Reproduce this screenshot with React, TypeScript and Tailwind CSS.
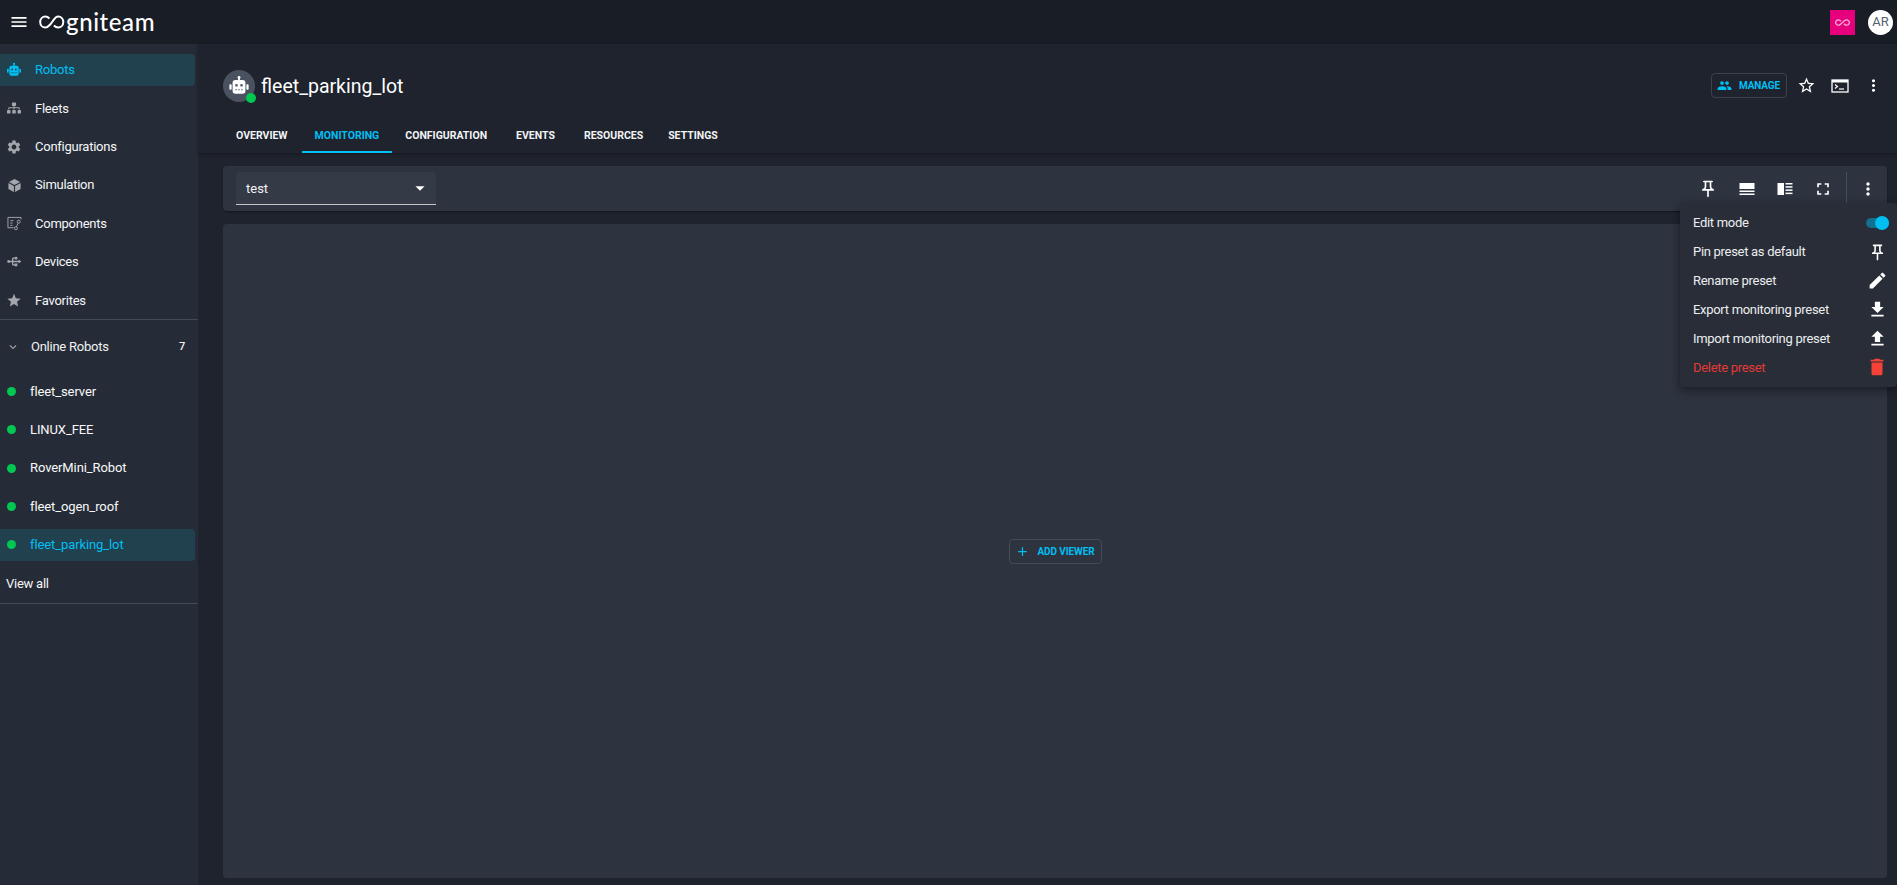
import { MdSettings, MdStar, MdStarBorder, MdPeople, MdMoreVert, MdOutlinePushPin, MdFullscreen, MdEdit, MdFileDownload, MdFileUpload, MdDelete, MdAllInclusive, MdAdd, MdArrowDropDown, MdExpandMore, MdUsb, MdMenu } from "react-icons/md";
import { FaSitemap } from "react-icons/fa";
import type { ReactNode } from "react";

const font = "font-['Roboto','Noto_Sans',sans-serif]";

function ComponentsIcon() {
  return (
    <svg width="15" height="15" viewBox="0 0 16 16" fill="none" stroke="currentColor" strokeWidth="1">
      <path d="M15 3.5V1.5H1V12.5H7" />
      <path d="M3.5 5H7M3.5 7.5H6M3.500 10H6" />
      <circle cx="12.5" cy="6" r="1.6" />
      <circle cx="9.5" cy="13" r="1.6" />
      <path d="M12 7.500L10 11.500" />
    </svg>
  );
}

function RobotIcon({ size, bg }: { size: number; bg: string }) {
  return (
    <svg width={size} height={size} viewBox="0 0 24 24" fill="currentColor">
      <rect x="11" y="2" width="2" height="4" />
      <circle cx="12" cy="2.500" r="1.500" />
      <rect x="5" y="5.500" width="14" height="15" rx="3" />
      <rect x="1.500" y="10" width="2.500" height="6" rx="1" />
      <rect x="20" y="10" width="2.500" height="6" rx="1" />
      <rect x="8" y="10" width="2.500" height="2.500" fill={bg} />
      <rect x="13.500" y="10" width="2.500" height="2.500" fill={bg} />
      <path d="M8 15.500h1.600v1.200H8zM11.200 15.500h1.600v1.200h-1.600zM14.400 15.500H16v1.200h-1.600z" fill={bg} />
    </svg>
  );
}

function CubeIcon() {
  return (
    <svg width="15" height="15" viewBox="0 0 16 16" fill="currentColor">
      <path d="M8 1l6 3.200L8 7.500 2 4.200 8 1z" />
      <path d="M1.500 5.200L7.400 8.500v6.500l-5.900-3.200V5.200z" />
      <path d="M14.500 5.200L8.600 8.500v6.500l5.900-3.200V5.200z" />
    </svg>
  );
}

function LinesIcon() {
  return (
    <svg width="18" height="14" viewBox="0 0 18 14" fill="currentColor">
      <rect x="1.500" y="1" width="15" height="6" />
      <rect x="1.500" y="8.500" width="15" height="1.500" />
      <rect x="1.500" y="11.500" width="15" height="1.500" />
    </svg>
  );
}

function PanelIcon() {
  return (
    <svg width="18" height="14" viewBox="0 0 18 14" fill="currentColor">
      <rect x="1.500" y="1" width="6.500" height="12" />
      <rect x="9.500" y="1" width="7" height="1.500" />
      <rect x="9.500" y="4.200" width="7" height="1.500" />
      <rect x="9.500" y="7.400" width="7" height="1.500" />
      <rect x="9.500" y="10.600" width="7" height="1.500" />
    </svg>
  );
}

function TerminalIcon() {
  return (
    <svg width="18" height="14" viewBox="0 0 18 14" fill="none" stroke="currentColor">
      <rect x="1" y="1" width="16" height="12" strokeWidth="1.300" />
      <rect x="1" y="1" width="16" height="2.500" fill="currentColor" strokeWidth="0" />
      <path d="M4 5.500L6.500 7.500 4 9.500" strokeWidth="1.200" />
      <path d="M8 10H13" strokeWidth="1.200" />
    </svg>
  );
}

function NavItem({ icon, label, active }: { icon: ReactNode; label: string; active?: boolean }) {
  return (
    <div className={`flex h-[32px] w-[195px] items-center rounded-r-[4px] pl-[6px] text-[13px] tracking-[-0.25px] ${active ? "bg-[#21414f] text-[#00bff3]" : "text-[#f5f6f7]"}`}>
      <span className={`flex w-[16px] justify-center ${active ? "text-[#00bff3]" : "text-[#a3a6ac]"}`}>{icon}</span>
      <span className="ml-[13px]">{label}</span>
    </div>
  );
}

function RobotItem({ label, active }: { label: string; active?: boolean }) {
  return (
    <div className={`flex h-[32px] w-[195px] items-center rounded-r-[4px] pl-[7px] text-[13px] tracking-[-0.1px] ${active ? "bg-[#21414f] text-[#00bff3]" : "text-[#f8f9fa]"}`}>
      <span className="h-[9px] w-[9px] rounded-full bg-[#00c853]" />
      <span className="ml-[14px]">{label}</span>
    </div>
  );
}

function MenuRow({ label, icon, danger }: { label: string; icon: ReactNode; danger?: boolean }) {
  return (
    <div className={`flex h-[28.8px] items-center justify-between pl-[13px] pr-[9px] text-[13px] tracking-[-0.3px] ${danger ? "text-[#e53935]" : "text-[#ecedef]"}`}>
      <span>{label}</span>
      <span className={`flex w-[22px] justify-center ${danger ? "text-[#f44336]" : "text-white"}`}>{icon}</span>
    </div>
  );
}

const tabs = ["OVERVIEW", "MONITORING", "CONFIGURATION", "EVENTS", "RESOURCES", "SETTINGS"];

export default function App() {
  return (
    <div className={`relative flex h-[885px] w-[1897px] flex-col overflow-hidden bg-[#1f232d] ${font}`}>
      <header className="flex h-[44px] shrink-0 items-center justify-between bg-[#191d26] pl-[9px] pr-[4px]">
        <div className="flex items-center">
          <MdMenu size={20} className="text-white" />
          <div className="ml-[10px] flex items-center text-white">
            <svg width="26" height="14" viewBox="0 0 26 14" fill="none" stroke="currentColor" strokeWidth="2">
              <path d="M10.500 3.500C9.200 2.200 7.800 1.500 6.300 1.500 3.400 1.500 1.200 3.900 1.200 7s2.200 5.500 5.100 5.500c2 0 3.300-1.200 4.900-3l2.600-3.500c1.400-2 2.800-4.500 5.400-4.500 2.900 0 5.100 2.400 5.100 5.500s-2.200 5.500-5.100 5.500c-1.700 0-3-0.700-4.300-2" />
            </svg>
            <span className="ml-[1px] font-['Lato',sans-serif] text-[24px] leading-none font-medium tracking-[0.6px]">gniteam</span>
          </div>
        </div>
        <div className="flex items-center">
          <div className="flex h-[25px] w-[25px] items-center justify-center bg-[#e6007e] text-[#f7b3d8]">
            <MdAllInclusive size={15} />
          </div>
          <div className="ml-[13px] flex h-[25px] w-[25px] items-center justify-center rounded-full bg-white text-[13px] text-[#555f6e]">AR</div>
        </div>
      </header>

      <div className="flex min-h-0 flex-1">
        <aside className="w-[198px] shrink-0 bg-[#262c37]">
          <nav className="flex flex-col gap-[6.4px] pt-[10px]">
            <NavItem active label="Robots" icon={<RobotIcon size={18} bg="#21414f" />} />
            <NavItem label="Fleets" icon={<FaSitemap size={14} />} />
            <NavItem label="Configurations" icon={<MdSettings size={16} />} />
            <NavItem label="Simulation" icon={<CubeIcon />} />
            <NavItem label="Components" icon={<ComponentsIcon />} />
            <NavItem label="Devices" icon={<MdUsb size={17} className="rotate-90" />} />
            <NavItem label="Favorites" icon={<MdStar size={17} />} />
          </nav>
          <div className="mt-[3px] border-b border-[#444a55]" />
          <div className="flex h-[53px] items-center pl-[6px] pr-[13px] text-[13px] tracking-[-0.25px] text-[#f0f1f3]">
            <MdExpandMore size={14} className="text-[#a3a6ac]" />
            <span className="ml-[11px] flex-1">Online Robots</span>
            <span className="text-[11px] font-medium">7</span>
          </div>
          <div className="flex flex-col gap-[6.4px] pt-[2px]">
            <RobotItem label="fleet_server" />
            <RobotItem label="LINUX_FEE" />
            <RobotItem label="RoverMini_Robot" />
            <RobotItem label="fleet_ogen_roof" />
            <RobotItem active label="fleet_parking_lot" />
          </div>
          <div className="mt-[4px] flex h-[38px] items-center pl-[6px] text-[13px] tracking-[-0.25px] text-[#f5f6f7]">View all</div>
          <div className="border-b border-[#444a55]" />
        </aside>

        <main className="flex min-w-0 flex-1 flex-col">
          <section className="h-[109px] shrink-0 bg-[#1f232d] shadow-[0_1px_3px_rgba(0,0,0,0.35)]">
            <div className="flex items-start justify-between pl-[25px] pr-[14px] pt-[26px]">
              <div className="flex items-center">
                <div className="relative flex h-[32px] w-[32px] items-center justify-center rounded-full bg-[#4a5260] text-white">
                  <RobotIcon size={22} bg="#4a5260" />
                  <span className="absolute bottom-[-1px] right-[-1px] h-[10px] w-[10px] rounded-full bg-[#00c853]" />
                </div>
                <span className="ml-[6px] mt-[1px] text-[19.5px] text-white">fleet_parking_lot</span>
              </div>
              <div className="flex items-center pt-[3px]">
                <div className="flex h-[25px] w-[76px] items-center justify-center gap-[7px] rounded-[4px] border border-[#3c424d] text-[10px] font-bold tracking-[-0.1px] text-[#00bff3]">
                  <MdPeople size={15} />
                  <span>MANAGE</span>
                </div>
                <MdStarBorder size={19} className="ml-[10px] text-white" />
                <span className="ml-[15px] text-white"><TerminalIcon /></span>
                <MdMoreVert size={19} className="ml-[15.5px] text-white" />
              </div>
            </div>
            <div className="mt-[19px] flex pl-[38px] text-[10.5px] font-bold text-[#f2f3f5]">
              {tabs.map((t, i) => (
                <div key={t} className={`flex h-[32px] items-center border-b-2 ${i === 1 ? "border-[#00bff3] px-[13px] text-[#00bff3]" : "border-transparent"} ${i === 0 ? "mr-[14px]" : ""} ${i === 2 ? "ml-[13px] mr-[29px]" : ""} ${i === 3 ? "mr-[29px]" : ""} ${i === 4 ? "mr-[25px]" : ""}`}>{t}</div>
              ))}
            </div>
          </section>

          <div className="flex min-h-0 flex-1 flex-col px-[10px] pb-[7px] pt-[13px] pl-[25px]">
            <div className="flex h-[45px] shrink-0 items-start justify-between rounded-[4px] bg-[#2d333f] pl-[13px] pr-[9px] pt-[6px] shadow-[0_1px_2px_rgba(0,0,0,0.4)]">
              <div className="flex h-[33px] w-[200px] items-center justify-between rounded-t-[4px] border-b border-[#c4c6ca] bg-[#353a47] pl-[10px] pr-[5px] text-[13px] text-[#f2f3f5]">
                <span className="mt-[1px]">test</span>
                <MdArrowDropDown size={22} className="text-white" />
              </div>
              <div className="flex h-[33px] items-center text-white">
                <MdOutlinePushPin size={20} />
                <span className="ml-[20px]"><LinesIcon /></span>
                <span className="ml-[20px]"><PanelIcon /></span>
                <MdFullscreen size={20} className="ml-[19px]" />
                <div className="ml-[13px] h-[33px] border-l border-[#484e5a]" />
                <MdMoreVert size={20} className="ml-[11px]" />
              </div>
            </div>
            <div className="mt-[13px] flex min-h-0 flex-1 items-center justify-center rounded-[4px] bg-[#2d333f]">
              <div className="flex h-[25px] w-[93px] items-center justify-center gap-[7px] rounded-[4px] border border-[#444a56] text-[10px] font-bold tracking-[-0.1px] text-[#00bff3]">
                <MdAdd size={15} />
                <span>ADD VIEWER</span>
              </div>
            </div>
          </div>
        </main>
      </div>

      <div className="absolute left-[1680px] top-[203px] w-[217px] rounded-[4px] bg-[#282d38] pb-[5px] pt-[5px] shadow-[0_3px_10px_rgba(0,0,0,0.45)]">
        <div className="flex h-[29.8px] items-center justify-between pl-[13px] pr-[8px] text-[13px] tracking-[-0.3px] text-[#ecedef]">
          <span>Edit mode</span>
          <div className="relative h-[10px] w-[23px] rounded-full bg-[#14708f]">
            <span className="absolute right-0 top-[-2px] h-[14px] w-[14px] rounded-full bg-[#00bff3]" />
          </div>
        </div>
        <MenuRow label="Pin preset as default" icon={<MdOutlinePushPin size={19} />} />
        <MenuRow label="Rename preset" icon={<MdEdit size={21} />} />
        <MenuRow label="Export monitoring preset" icon={<MdFileDownload size={21} />} />
        <MenuRow label="Import monitoring preset" icon={<MdFileUpload size={21} />} />
        <MenuRow danger label="Delete preset" icon={<MdDelete size={22} />} />
      </div>
    </div>
  );
}
